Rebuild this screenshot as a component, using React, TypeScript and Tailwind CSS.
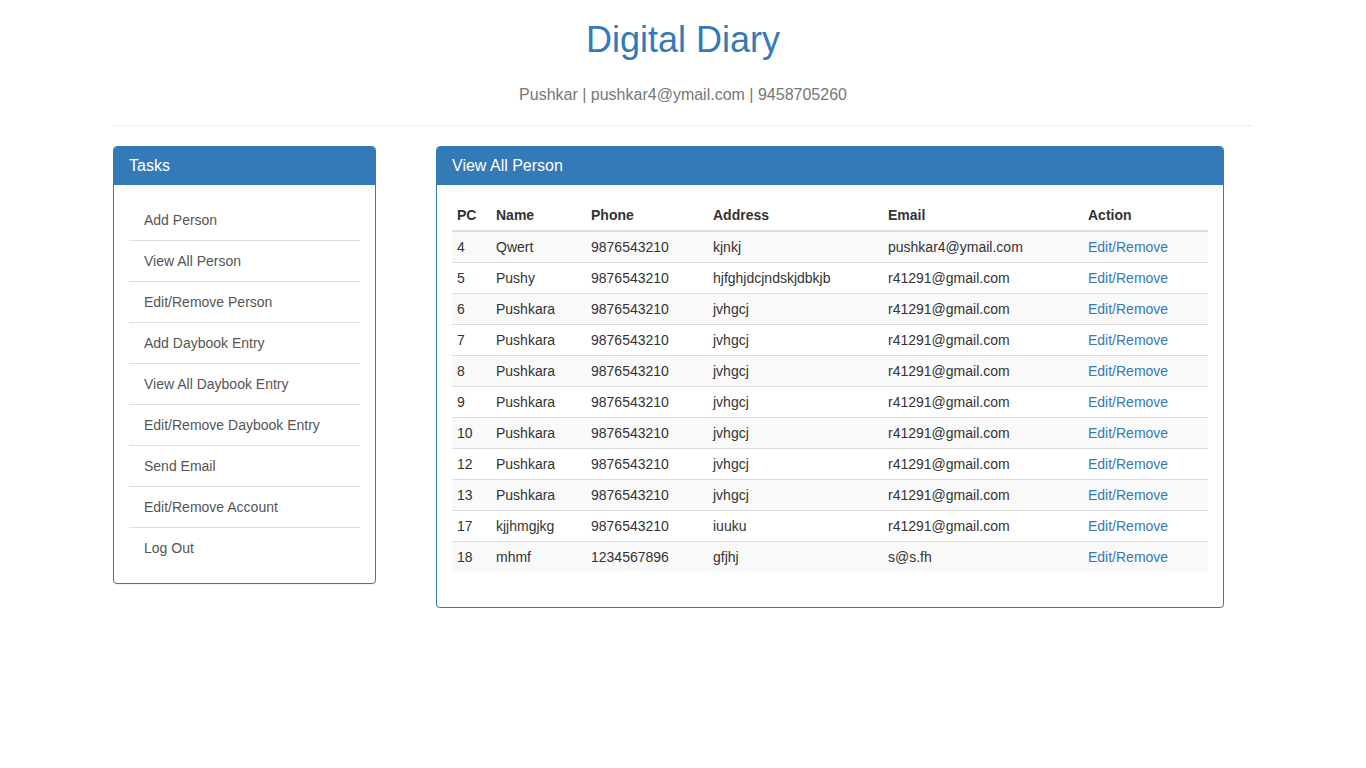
const tasks = [
  'Add Person',
  'View All Person',
  'Edit/Remove Person',
  'Add Daybook Entry',
  'View All Daybook Entry',
  'Edit/Remove Daybook Entry',
  'Send Email',
  'Edit/Remove Account',
  'Log Out',
];

type Person = { pc: number; name: string; phone: string; address: string; email: string };

const people: Person[] = [
  { pc: 4, name: 'Qwert', phone: '9876543210', address: 'kjnkj', email: 'pushkar4@ymail.com' },
  { pc: 5, name: 'Pushy', phone: '9876543210', address: 'hjfghjdcjndskjdbkjb', email: 'r41291@gmail.com' },
  { pc: 6, name: 'Pushkara', phone: '9876543210', address: 'jvhgcj', email: 'r41291@gmail.com' },
  { pc: 7, name: 'Pushkara', phone: '9876543210', address: 'jvhgcj', email: 'r41291@gmail.com' },
  { pc: 8, name: 'Pushkara', phone: '9876543210', address: 'jvhgcj', email: 'r41291@gmail.com' },
  { pc: 9, name: 'Pushkara', phone: '9876543210', address: 'jvhgcj', email: 'r41291@gmail.com' },
  { pc: 10, name: 'Pushkara', phone: '9876543210', address: 'jvhgcj', email: 'r41291@gmail.com' },
  { pc: 12, name: 'Pushkara', phone: '9876543210', address: 'jvhgcj', email: 'r41291@gmail.com' },
  { pc: 13, name: 'Pushkara', phone: '9876543210', address: 'jvhgcj', email: 'r41291@gmail.com' },
  { pc: 17, name: 'kjjhmgjkg', phone: '9876543210', address: 'iuuku', email: 'r41291@gmail.com' },
  { pc: 18, name: 'mhmf', phone: '1234567896', address: 'gfjhj', email: 's@s.fh' },
];

function PanelHeading({ title }: { title: string }) {
  return (
    <h2 className="bg-[#337ab7] px-[15px] py-2.5 text-base leading-[18px] text-white">{title}</h2>
  );
}

function TaskPanel() {
  return (
    <nav className="w-full overflow-hidden rounded border border-[#337ab7] bg-white shadow-[0_1px_1px_rgba(0,0,0,0.05)] md:w-[263px] md:shrink-0">
      <PanelHeading title="Tasks" />
      <ul className="divide-y divide-[#ddd] p-[15px]">
        {tasks.map((task) => (
          <li key={task}>
            <a href="#" className="block px-[15px] py-2.5 text-[#555] hover:bg-[#f5f5f5]">
              {task}
            </a>
          </li>
        ))}
      </ul>
    </nav>
  );
}

function PersonTable() {
  return (
    <table className="w-full border-collapse text-left">
      <colgroup>
        <col className="w-[39px]" />
        <col className="w-[95px]" />
        <col className="w-[122px]" />
        <col className="w-[175px]" />
        <col className="w-[200px]" />
        <col />
      </colgroup>
      <thead>
        <tr className="border-b-2 border-[#ddd]">
          {['PC', 'Name', 'Phone', 'Address', 'Email', 'Action'].map((heading) => (
            <th key={heading} scope="col" className="p-[5px] font-bold">
              {heading}
            </th>
          ))}
        </tr>
      </thead>
      <tbody className="divide-y divide-[#ddd]">
        {people.map((person) => (
          <tr key={person.pc} className="odd:bg-[#f9f9f9]">
            <td className="p-[5px]">{person.pc}</td>
            <td className="p-[5px]">{person.name}</td>
            <td className="p-[5px]">{person.phone}</td>
            <td className="p-[5px]">{person.address}</td>
            <td className="p-[5px]">{person.email}</td>
            <td className="p-[5px]">
              <a href="#" className="text-[#337ab7] hover:underline">
                Edit/Remove
              </a>
            </td>
          </tr>
        ))}
      </tbody>
    </table>
  );
}

export default function App() {
  return (
    <div className="mx-auto max-w-[1170px] px-[15px] font-['Liberation_Sans',Arial,sans-serif] text-sm leading-5 text-[#333]">
      <header className="border-b border-[#eee] py-5 text-center">
        <h1 className="text-4xl leading-10 text-[#337ab7]">Digital Diary</h1>
        <p className="mt-[25px] text-base leading-5 text-[#777]">Pushkar | pushkar4@ymail.com | 9458705260</p>
      </header>
      <main className="mt-5 flex flex-col items-start gap-5 md:flex-row md:gap-[60px] md:pr-[29px]">
        <TaskPanel />
        <section className="w-full min-w-0 overflow-hidden rounded border border-[#337ab7] bg-white shadow-[0_1px_1px_rgba(0,0,0,0.05)] md:flex-1">
          <PanelHeading title="View All Person" />
          <div className="overflow-x-auto px-[15px] pt-[15px] pb-[35px]">
            <PersonTable />
          </div>
        </section>
      </main>
    </div>
  );
}
